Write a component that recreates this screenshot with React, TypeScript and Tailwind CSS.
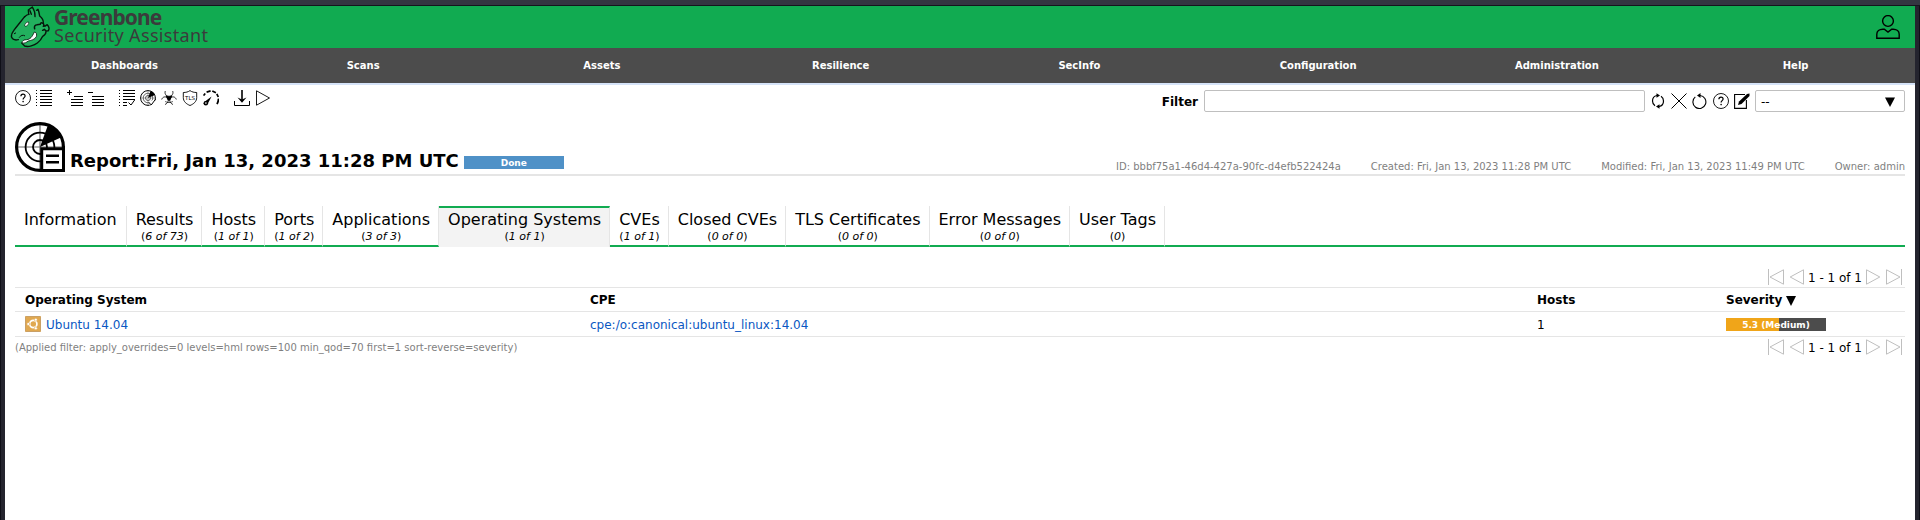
import React from "react";

const Q = () => (
  <svg viewBox="0 0 16 16" className="h-4 w-4 shrink-0" fill="none" stroke="#000">
    <circle cx="8" cy="8" r="7.5" strokeWidth="0.9" />
    <path d="M5.9 6.3C5.9 4.8 6.8 4.1 8 4.1s2.1.8 2.1 1.9c0 1.6-2 1.6-2 3.4" strokeWidth="1.2" />
    <circle cx="8.1" cy="11.6" r=".8" fill="#000" stroke="none" />
  </svg>
);

const ReportLarge = () => (
  <svg viewBox="0 0 50 50" className="h-[50px] w-[50px] shrink-0" fill="none" stroke="#000">
    <path d="M2 25h46M25 2v46" strokeWidth="1.2" stroke="#666" />
    <circle cx="25" cy="25" r="23.4" strokeWidth="3.2" />
    <circle cx="25" cy="25" r="14.4" strokeWidth="1.8" />
    <circle cx="25" cy="25" r="7" strokeWidth="1.8" />
    <path d="M25 25 33 3C39 5 44 9 47 15z" fill="#000" stroke="none" />
    <path d="M48.5 24v3" strokeWidth="3" />
    <path d="M26.700 26.700h21.800v21.800H26.700z" fill="#fff" strokeWidth="3" />
    <path d="M31 33.800h13M31 40.200h13" strokeWidth="2.400" />
  </svg>
);

const ReportSmall = () => (
  <svg viewBox="0 0 16 16" className="h-4 w-4 shrink-0" fill="none" stroke="#000">
    <circle cx="8" cy="8" r="7.4" strokeWidth="1" />
    <circle cx="8" cy="8" r="4.8" strokeWidth=".6" />
    <circle cx="8" cy="8" r="2.5" strokeWidth=".6" />
    <path d="M8 .5v15M.5 8h15" strokeWidth=".3" />
    <path d="M8 8 10.500 1C12.500 1.500 14.500 3.300 15 5z" fill="#000" stroke="none" />
    <path d="M9.500 11.500v4l6-1V9z" fill="#fff" stroke="none" />
    <path d="M9 12.500l2.200 2.500L15.700 9" strokeWidth="1" />
  </svg>
);

const Logo = () => (
  <svg viewBox="30 18 120 126" className="h-[42px] w-10 shrink-0" fill="none" stroke="#06170c" strokeWidth="4.2" strokeLinejoin="round" strokeLinecap="round">
    <path d="M87 42 85 31 97 21 105 38 113 28 119 48 130 62 132 74 143 76 147 90 137 104 128 112 113 130 94 139 72 138 67 128 50 124 37 116 34 104 42 90 60 68 72 52z" fill="#22b05e" stroke="none" />
    <path d="M74 50C64 63 48 82 41 92c-6 8-8 14-6 20 3 7 11 9 20 7" />
    <path d="M86 42 85 30 97 21c5 8 9 18 8 29M90 32l4 11M110 31l4-3c3 8 4 15 5 20 8 6 12 13 11 23" />
    <path d="M74 50c5-5 9-7 13-7" />
    <path d="M104 86c-2-6 1-12 7-12l10-1c0-4 3-6 8-3 3 3 3 6 1 9 6 0 9-3 11-5 5 4 8 12 4 18l-7 1-5-5-5 3" strokeWidth="4.500" />
    <path d="M138 95c0 6-4 10-10 14-3 7-9 15-16 20-9 7-27 13-38 9l-8-8" />
    <path d="M66 129c-1-7 6-10 14-10 11-1 16-8 23-23 7 1 8 8 6 14-5 9-15 11-24 13-6 4-10 8-19 6z" fill="#fff" strokeWidth="2.500" />
    <path d="M74 75c1-5 6-9 12-9 1 6-3 12-9 13z" fill="#fff" strokeWidth="2" />
    <path d="M43 101l4-2M58 112c4-6 11-8 16-5" strokeWidth="3" />
  </svg>
);

const Toolbar = () => (
  <div className="flex h-4 text-black">
    <Q />
    <svg viewBox="0 0 16 16" className="ml-[5px] h-4 w-4" stroke="#000" shapeRendering="crispEdges">
      <path d="M4 .5h12M4 3.500h12M4 6.500h12M4 9.500h12M4 12.500h12M4 15.500h12M0 .5h1M0 3.500h1M0 6.500h1M0 9.500h1M0 12.500h1M0 15.500h1" />
    </svg>
    <svg viewBox="0 0 16 16" className="ml-[15px] h-4 w-4" stroke="#000" shapeRendering="crispEdges">
      <path d="M0 2.500h5M2.500 0v5M7 6.500h9M4 9.500h12M4 12.500h12M4 15.500h12" />
    </svg>
    <svg viewBox="0 0 16 16" className="ml-[5px] h-4 w-4" stroke="#000" shapeRendering="crispEdges">
      <path d="M0 2.500h5M4 6.500h12M4 9.500h12M4 12.500h12M4 15.500h12" />
    </svg>
    <svg viewBox="0 0 16 16" className="ml-[15px] h-4 w-4" stroke="#000" fill="none">
      <path shapeRendering="crispEdges" d="M4 .5h12M4 3.500h12M4 6.500h12M4 9.500h12M4 12.500h4M4 15.500h4M0 .5h1M0 3.500h1M0 6.500h1M0 9.500h1M0 12.500h1M0 15.500h1" />
      <path d="M9.500 12.500l2.500 2.500L16 9.500" />
    </svg>
    <div className="ml-[5px] flex"><ReportSmall /></div>
    <svg viewBox="0 0 16 16" className="ml-[5px] h-4 w-4" stroke="#000" fill="none" strokeWidth=".8">
      <path d="M4.300 1C3.500 3.500 4.500 6 8 6.300 11.500 6 12.500 3.500 11.700 1" />
      <path d="M.7 9.500C1.500 6.800 4.500 6 6.500 8c1.300 1.800 1 5-2.500 6.500M15.300 9.500C14.500 6.800 11.500 6 9.500 8c-1.300 1.800-1 5 2.500 6.500" />
      <path d="M4.700 5.200c2 1.400 4.600 1.400 6.600 0-.2 2-1.400 3-1.800 4.600L8 11 6.500 9.800C6.100 8.200 4.900 7.200 4.700 5.200z" fill="#000" stroke="none" />
      <path d="M4.200 11.500c2.300 1.400 5.300 1.400 7.600 0" strokeWidth=".7" />
    </svg>
    <svg viewBox="0 0 16 16" className="ml-[5px] h-4 w-4" stroke="#000" fill="none" strokeWidth=".9">
      <path d="M8 .6C6 2 4 2.500 1.300 2.500v5c0 4 3 6.500 6.700 8 3.700-1.500 6.700-4 6.700-8v-5C12 2.500 10 2 8 .6z" />
      <text x="8" y="9.500" textAnchor="middle" fontSize="5.500" stroke="none" fill="#000" className="font-['DejaVu_Sans']">TLS</text>
    </svg>
    <svg viewBox="0 0 16 16" className="ml-[5px] h-4 w-4" stroke="#000" fill="none" strokeWidth="1.700">
      <path d="M.6 5.600 2.200 3.400M3.600 2.100 7.600.9M9.300 1l3.600 1.700M13.800 3.800l1.500 3.200M15.400 8.600c.1 2-.4 3.800-1.400 5.600" />
      <path d="M1.600 11.700 8.600 6.400 4.500 14.300z" fill="#000" stroke="none" />
      <circle cx="2.800" cy="13.200" r="2.300" fill="#000" stroke="none" />
      <circle cx="2.900" cy="13.100" r=".8" fill="#fff" stroke="none" />
    </svg>
    <svg viewBox="0 0 16 16" className="ml-[15px] h-4 w-4" stroke="#000" fill="none">
      <path d="M.5 11v4.500h15V11" />
      <path d="M8 0v10" strokeWidth="1.600" />
      <path d="M3.500 7.500 8 12.800l4.500-5.300L8 9.500z" fill="#000" stroke="none" />
    </svg>
    <svg viewBox="0 0 16 16" className="ml-[5px] h-4 w-4" stroke="#000" fill="none" strokeWidth=".9">
      <path d="M1.500 .8v14.400L14.500 8z" />
    </svg>
  </div>
);

const FilterBar = () => (
  <div className="flex h-[22px] items-center">
    <b className="mr-[6px] pt-[2px] text-[12px]">Filter</b>
    <div className="h-[22px] w-[441px] rounded-[2px] border border-[#bfbfbf]" />
    <div className="ml-[5px] flex gap-[5px]">
      <svg viewBox="0 0 16 16" className="h-4 w-4" stroke="#000" fill="none" strokeWidth="1.200">
        <path d="M7 2.500C4 3 2.500 5.300 2.500 8c0 2 1 3.700 2.500 4.700M9 13.500c3-.5 4.500-2.800 4.500-5.500 0-2-1-3.700-2.500-4.700" />
        <path d="M6.500 .3 10 2.500l-3.500 2.300zM9.500 11.200l-3.500 2.300 3.500 2.300z" fill="#000" stroke="none" />
      </svg>
      <svg viewBox="0 0 16 16" className="h-4 w-4" stroke="#000"><path d="M.5 .5l15 15M15.500 .5l-15 15" /></svg>
      <svg viewBox="0 0 16 16" className="h-4 w-4" stroke="#000" fill="none" strokeWidth="1.100">
        <path d="M3.300 3.900A6.500 6.500 0 1 0 8 2.500h-2" />
        <path d="M8.500 0 5 2.500l3.500 2.500z" fill="#000" stroke="none" />
      </svg>
      <Q />
      <svg viewBox="0 0 16 16" className="h-4 w-4" stroke="#000" fill="none" strokeWidth="1.100">
        <path d="M11 1.500H.6v13.900h11.800V7" />
        <path d="M4 12l1-3.500L13 1l2.500-.5V3L7.500 11z" fill="#000" stroke="none" />
      </svg>
    </div>
    <div className="ml-[5px] flex h-[22px] w-[150px] items-center justify-between rounded-[2px] border border-[#bfbfbf] px-[5px] pt-[2px] text-[12px]">
      <span>--</span>
      <svg viewBox="0 0 10 10" className="mr-[4px] h-[10px] w-[10px]"><path d="M0 .5h10L5 10z" /></svg>
    </div>
  </div>
);

const tabs = [
  ["Information", ""], ["Results", "6 of 73"], ["Hosts", "1 of 1"], ["Ports", "1 of 2"], ["Applications", "3 of 3"],
  ["Operating Systems", "1 of 1"], ["CVEs", "1 of 1"], ["Closed CVEs", "0 of 0"], ["TLS Certificates", "0 of 0"],
  ["Error Messages", "0 of 0"], ["User Tags", "0"],
];

const Pager = () => (
  <div className="flex h-4 items-center justify-end pr-[3px]">
    <svg viewBox="0 0 16 16" className="h-4 w-4" stroke="#bfbfbf" fill="none"><path d="M.5 0v16M15.500 .8v14.400L2 8z" /></svg>
    <svg viewBox="0 0 16 16" className="ml-[5px] h-4 w-4" stroke="#bfbfbf" fill="none"><path d="M14.500 .8v14.400L1.200 8z" /></svg>
    <span className="mx-[3px] pt-[2px] text-[12px]">1 - 1 of 1</span>
    <svg viewBox="0 0 16 16" className="h-4 w-4" stroke="#bfbfbf" fill="none"><path d="M1.500 .8v14.400L14.800 8z" /></svg>
    <svg viewBox="0 0 16 16" className="ml-[5px] h-4 w-4" stroke="#bfbfbf" fill="none"><path d="M15.500 0v16M.5 .8v14.400L14 8z" /></svg>
  </div>
);

export default function App() {
  return (
    <div className="h-[520px] w-[1920px] overflow-hidden bg-[#24242e] font-['DejaVu_Sans',sans-serif] text-[12px] text-black">
      <div className="h-[6px] border-b border-[#15151d] bg-[#343641]" />
      <div className="flex h-[514px] border-x border-[#0f0f17] px-1">
      <div className="h-[514px] w-[1910px] bg-white">
        <header className="flex h-[42px] items-center justify-between bg-[#11ab51] pl-[5px] pr-[15px]">
          <div className="flex h-[42px] items-start">
            <Logo />
            <div className="ml-1 font-['Noto_Sans',sans-serif] text-[#3b3b3c]">
              <div className="mt-[1px] text-[21px] leading-[20px] font-bold tracking-[-0.9px]">Greenbone</div>
              <div className="-mt-[1px] text-[18px] leading-[18px] tracking-[0.32px]">Security Assistant</div>
            </div>
          </div>
          <svg viewBox="0 0 24 24" className="h-6 w-6" stroke="#000" fill="none" strokeWidth="1.400">
            <circle cx="12" cy="6" r="5.400" />
            <path d="M.8 23.200v-4c0-3 2.500-5 6-5h1.500L12 17l3.700-2.800h1.500c3.500 0 6 2 6 5v4z" />
          </svg>
        </header>
        <nav className="flex h-[35px] items-center bg-[#4c4c4c] text-[10px] font-bold text-white">
          {["Dashboards", "Scans", "Assets", "Resilience", "SecInfo", "Configuration", "Administration", "Help"].map((n) => (
            <div key={n} className="w-[238.750px] text-center">{n}</div>
          ))}
        </nav>
        <div className="h-[2px] bg-[#d5e3f8]" />
        <main className="px-[10px]">
          <div className="flex items-start justify-between pt-[5px]">
            <Toolbar />
            <FilterBar />
          </div>
          <div className="mt-[10px] flex h-[54px] items-start border-b-2 border-[#e5e5e5]">
            <ReportLarge />
            <h1 className="ml-[5px] mt-[28px] text-[18px] leading-[22px] font-bold">Report:Fri, Jan 13, 2023 11:28 PM UTC</h1>
            <div className="ml-[5px] mt-[34px] h-[13px] w-[100px] bg-[#4f91c7] text-center text-[9px] leading-[14px] font-bold text-white">Done</div>
            <div className="ml-auto mt-[38px] flex gap-[30px] text-[10px] leading-[14px] text-[#7f7f7f]">
              <span>ID: bbbf75a1-46d4-427a-90fc-d4efb522424a</span>
              <span>Created: Fri, Jan 13, 2023 11:28 PM UTC</span>
              <span>Modified: Fri, Jan 13, 2023 11:49 PM UTC</span>
              <span>Owner: admin</span>
            </div>
          </div>
          <div className="mt-[30px] flex h-[41px]">
            {tabs.map(([t, c]) => {
              const on = t === "Operating Systems";
              return (
                <div key={t} className={`border-r border-r-[#e5e5e5] pl-[9px] text-center whitespace-nowrap ${c ? "pr-[8px]" : "pr-[9px]"} ${on ? "border-t-2 border-t-[#11ab51] bg-[#f3f3f3] pt-[2px]" : "border-b-2 border-b-[#11ab51] pt-[4px]"}`}>
                  <div className="text-[16px] leading-[19px]">{t}</div>
                  <div className="mt-[1px] text-[11px] leading-[14px]">{c && <>(<i>{c}</i>)</>}</div>
                </div>
              );
            })}
            <div className="flex-1 border-b-2 border-[#11ab51]" />
          </div>
          <div className="mt-[22px]"><Pager /></div>
          <div className="mt-[2px] grid h-[25px] grid-cols-[565px_947px_189px_189px] border-y border-[#e5e5e5] pt-[1px] font-bold leading-[23px] [&>div]:pl-[10px]">
            <div>Operating System</div><div>CPE</div><div>Hosts</div>
            <div className="flex items-center gap-1">Severity<svg viewBox="0 0 10 10" className="mt-[1px] h-[10px] w-[10px]"><path d="M0 0h10L5 10z" /></svg></div>
          </div>
          <div className="grid h-[25px] grid-cols-[565px_947px_189px_189px] items-center border-b border-[#e5e5e5] leading-4 [&>div]:pl-[10px]">
            <div className="flex items-center gap-[5px] text-[#0a57c2]">
              <svg viewBox="0 0 16 16" className="h-4 w-4" fill="none" stroke="#fff">
                <rect width="16" height="16" rx="1" fill="#e0a850" stroke="none" />
                <rect x=".5" y=".5" width="15" height="15" rx="1" stroke="#c9a067" />
                <circle cx="8.300" cy="8" r="3.600" strokeWidth="1.700" />
                <g fill="#fff" stroke="#e0a850" strokeWidth=".6"><circle cx="3.300" cy="8" r="1.500" /><circle cx="10.800" cy="3.700" r="1.500" /><circle cx="10.800" cy="12.300" r="1.500" /></g>
              </svg>
              <span className="pt-[1px]">Ubuntu 14.04</span>
            </div>
            <div className="pt-[1px] text-[#0a57c2]">cpe:/o:canonical:ubuntu_linux:14.04</div>
            <div className="pt-[1px]">1</div>
            <div className="pt-[1px]">
              <div className="h-[13px] w-[100px] bg-[linear-gradient(90deg,#f0a519_53%,#4c4c4c_53%)] text-center text-[9px] leading-[14px] font-bold text-white">5.3 (Medium)</div>
            </div>
          </div>
          <div className="flex items-start justify-between pt-[2px]">
            <div className="mt-[2px] text-[10px] leading-[14px] text-[#7f7f7f]">(Applied filter: apply_overrides=0 levels=hml rows=100 min_qod=70 first=1 sort-reverse=severity)</div>
            <Pager />
          </div>
        </main>
      </div>
      </div>
    </div>
  );
}
